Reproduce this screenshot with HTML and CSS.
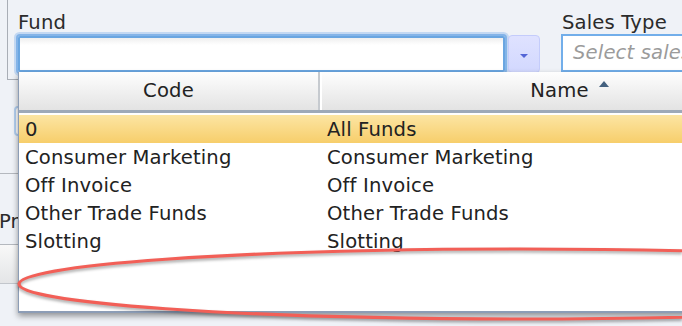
FILE: index.html
```html
<!DOCTYPE html>
<html>
<head>
<meta charset="utf-8">
<link rel="stylesheet" href="styles.css">
</head>
<body>
<div class="page">
  <div class="form-box">
    <div class="field fund">
      <div class="lbl">Fund</div>
      <div class="combo">
        <div class="combo-input"></div>
        <div class="combo-btn"><span class="caret"></span></div>
      </div>
    </div>
    <div class="field sales">
      <div class="lbl">Sales Type</div>
      <div class="text-input placeholder">Select sales type</div>
    </div>
  </div>
  <div class="stub-input"></div>
  <div class="sep"></div>
  <div class="pr-label">Pr</div>
  <div class="toolbar"></div>

  <div class="dropdown">
    <div class="dd-head">
      <div class="hcell c1"><span>Code</span></div>
      <div class="hcell c2"><span class="sorted">Name</span></div>
    </div>
    <div class="dd-body">
      <div class="dd-row selected"><div class="cell c1">0</div><div class="cell c2">All Funds</div></div>
      <div class="dd-row"><div class="cell c1">Consumer Marketing</div><div class="cell c2">Consumer Marketing</div></div>
      <div class="dd-row"><div class="cell c1">Off Invoice</div><div class="cell c2">Off Invoice</div></div>
      <div class="dd-row"><div class="cell c1">Other Trade Funds</div><div class="cell c2">Other Trade Funds</div></div>
      <div class="dd-row"><div class="cell c1">Slotting</div><div class="cell c2">Slotting</div></div>
    </div>
  </div>

  <svg class="annot" width="682" height="326" viewBox="0 0 682 326">
    <ellipse cx="520" cy="284" rx="501" ry="35" fill="none" stroke="#f25f57" stroke-width="3.2"/>
  </svg>
</div>
</body>
</html>
```

FILE: styles.css
```css
html, body {
  margin: 0;
  padding: 0;
}
body {
  width: 682px;
  height: 326px;
  overflow: hidden;
  background: #eff2f7;
  font-family: "DejaVu Sans", Verdana, sans-serif;
  font-size: 19.6px;
  letter-spacing: 0.15px;
  color: #222;
}
.page {
  position: relative;
  width: 682px;
  height: 326px;
  overflow: hidden;
}
.form-box {
  margin-left: 7px;
  height: 79px;
  border-left: 1px solid #a9aeb6;
  border-bottom: 1px solid #a9aeb6;
  padding-left: 10px;
  display: flex;
}
.field {
  display: flex;
  flex-direction: column;
}
.fund {
  width: 522px;
  flex: none;
}
.sales {
  margin-left: 21px;
  flex: none;
  width: 200px;
}
.lbl {
  margin-top: 12px;
  height: 22px;
  line-height: 22px;
  color: #2b2b2b;
  white-space: nowrap;
}
.sales .lbl {
  margin-left: 1px;
}
.combo {
  margin-top: 2px;
  display: flex;
  height: 36px;
}
.combo-input {
  width: 487px;
  height: 36px;
  box-sizing: border-box;
  border: 2px solid #6aa6e1;
  border-radius: 2px;
  background: linear-gradient(#efefef, #ffffff 7px);
  box-shadow: 0 0 0 2px #84b4e8, 0 0 0 4px #c3d8f2;
}
.combo-btn {
  margin-left: 3px;
  margin-top: -1px;
  width: 32px;
  height: 38px;
  box-sizing: border-box;
  border: 1px solid #c4ccfb;
  border-radius: 4px;
  background: linear-gradient(#dfe2ff, #d2d8fe);
  display: flex;
  align-items: center;
  justify-content: center;
}
.caret {
  display: block;
  width: 0;
  height: 0;
  border-left: 4px solid transparent;
  border-right: 4px solid transparent;
  border-top: 4px solid #5365d6;
  margin-top: 4px;
}
.text-input {
  height: 38px;
  box-sizing: border-box;
  border: 2px solid #72aeea;
  background: #fff;
  padding-left: 10px;
  line-height: 34px;
  white-space: nowrap;
  overflow: hidden;
  width: 200px;
}
.placeholder {
  color: #9b9b9b;
  font-style: italic;
}
.stub-input {
  margin-left: 14px;
  margin-top: 26px;
  width: 60px;
  height: 30px;
  box-sizing: border-box;
  border: 2px solid #b3cff0;
  border-radius: 4px;
  background: #fff;
}
.sep {
  margin-top: 37px;
  height: 0;
  border-top: 1px solid #b4b8be;
}
.pr-label {
  margin-top: 37px;
  margin-left: -1px;
  width: 19px;
  overflow: hidden;
  height: 22px;
  line-height: 22px;
  color: #2b2b2b;
  white-space: nowrap;
}
.toolbar {
  margin-top: 11px;
  height: 38px;
  border-top: 1px solid #b4b8be;
  border-bottom: 1px solid #c2c6cc;
  background: linear-gradient(#f8f8f8, #e4e5e7);
}

/* dropdown overlay */
.dropdown {
  position: absolute;
  left: 18px;
  top: 72px;
  width: 779px;
  height: 241px;
  box-sizing: border-box;
  border-left: 1px solid #8c9db6;
  border-bottom: 2px solid #8c9db6;
  background: #fff;
  box-shadow: 0 3px 6px rgba(0, 0, 0, 0.4);
}
.dd-head {
  display: flex;
  height: 38px;
  background: linear-gradient(#fefefe, #e3e3e3);
  border-bottom: 3px solid #9ea9b8;
}
.hcell {
  line-height: 38px;
  text-align: center;
  box-sizing: border-box;
}
.c1 {
  width: 301px;
  flex: none;
}
.c2 {
  width: 477px;
  flex: none;
}
.hcell.c1 {
  border-right: 2px solid #c6cacf;
}
.hcell.c2 {
  border-left: 2px solid #ffffff;
}
.sorted {
  position: relative;
}
.sorted::after {
  content: "";
  position: absolute;
  left: calc(100% + 10px);
  top: 2px;
  width: 0;
  height: 0;
  border-left: 5.5px solid transparent;
  border-right: 5.5px solid transparent;
  border-bottom: 6px solid #44617f;
}
.dd-body {
  padding-top: 2px;
}
.dd-row {
  display: flex;
  height: 28px;
  box-sizing: border-box;
  padding-top: 1.5px;
  line-height: 26.5px;
  white-space: nowrap;
}
.dd-row.selected {
  background: linear-gradient(#fce5a3, #f7ce6b);
}
.cell {
  box-sizing: border-box;
  overflow: hidden;
}
.cell.c1 {
  padding-left: 6px;
}
.cell.c2 {
  padding-left: 7px;
}

.annot {
  position: absolute;
  left: 0;
  top: 0;
  pointer-events: none;
  filter: drop-shadow(0 2px 1.5px rgba(0, 0, 0, 0.35));
}
```
